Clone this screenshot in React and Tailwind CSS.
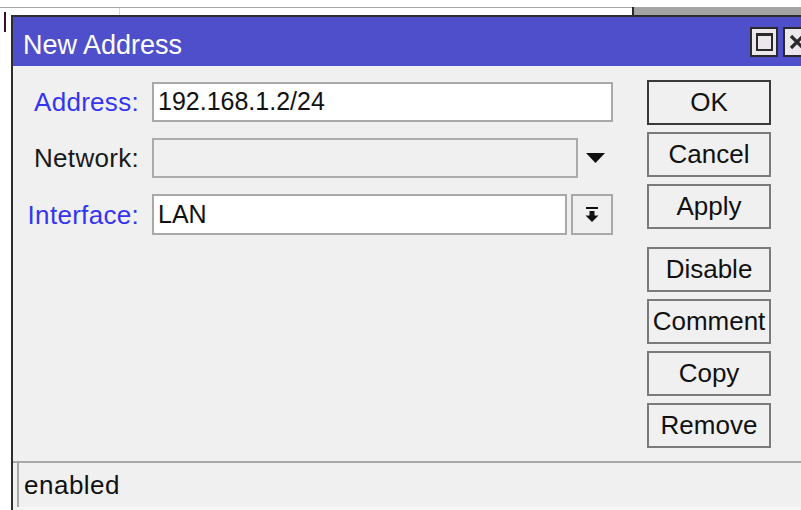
import React from "react";

const FONT = { fontFamily: '"Liberation Sans", Arial, sans-serif' };

function SideButton({ label, primary, className = "" }) {
  return (
    <button
      type="button"
      className={`flex h-[45px] w-[124px] items-center justify-center border-2 bg-[#f0f0f0] text-[26px] text-[#111] ${
        primary ? "border-[#3a3a3a]" : "border-[#7a7a7a]"
      } ${className}`}
    >
      {label}
    </button>
  );
}

function FieldLabel({ children, blue }) {
  return (
    <span
      className={`w-[126px] shrink-0 text-right text-[26px] leading-none tracking-[0.3px] ${
        blue ? "text-[#3434f2]" : "text-[#1a1a1a]"
      }`}
    >
      {children}
    </span>
  );
}

export default function App() {
  return (
    <div className="relative h-[510px] w-[801px] overflow-hidden bg-white" style={FONT}>
      {/* strip of the list window behind the dialog */}
      <div className="flex h-[15px] w-full">
        <div className="mt-[7px] flex h-[8px] w-[632px] border-t border-[#a6a6a6] bg-white">
          <div className="w-[120px] border-r border-[#d6d6d6]" />
        </div>
        <div className="mt-[7px] h-[8px] flex-1 border-l-2 border-[#2a2a2a] bg-[#a4a4a4]" />
      </div>

      {/* text cursor left over in the background */}
      <div className="absolute left-[4px] top-[12px] h-[20px] w-[2px] bg-[#3a1020]" />

      <div className="ml-[11px] w-[812px] border-l-2 border-t-2 border-[#2c2c2c] bg-[#f0f0f0]">
        {/* title bar */}
        <div className="flex h-[49px] items-center bg-[#4f4fcb] pl-[10px] pr-[12px]">
          <span className="pt-[7px] text-[27px] text-white">New Address</span>
          <div className="ml-auto flex gap-[5px]">
            <div className="flex h-[30px] w-[28px] items-center justify-center border-2 border-[#2a2a2a] bg-[#ebe7ec]">
              <div className="h-[18px] w-[17px] border-2 border-t-[3px] border-[#2a2a2a]" />
            </div>
            <div className="flex h-[30px] w-[28px] items-center justify-center border-2 border-[#2a2a2a] bg-[#ebe7ec]">
              <svg width="16" height="16" viewBox="0 0 16 16">
                <path d="M2 2 L14 14 M14 2 L2 14" stroke="#2a2a2a" strokeWidth="3.2" />
              </svg>
            </div>
          </div>
        </div>

        {/* form and buttons */}
        <div className="flex h-[395px]">
          <div className="flex flex-col gap-[16px] pt-[16px]">
            <div className="flex h-[40px] items-center">
              <FieldLabel blue>Address:</FieldLabel>
              <div className="ml-[13px] flex h-[40px] w-[461px] items-center border-2 border-[#a9a9a9] bg-white pl-[4px] text-[25px] text-[#111]">
                192.168.1.2/24
              </div>
            </div>
            <div className="flex h-[40px] items-center">
              <FieldLabel>Network:</FieldLabel>
              <div className="ml-[13px] h-[40px] w-[426px] border-2 border-[#ababab] bg-[#f0f0f0]" />
              <div className="flex w-[35px] items-center justify-center">
                <svg width="19" height="10" viewBox="0 0 19 10">
                  <path d="M0 0 H19 L9.5 10 Z" fill="#111" />
                </svg>
              </div>
            </div>
            <div className="flex h-[41px] items-center">
              <FieldLabel blue>Interface:</FieldLabel>
              <div className="ml-[13px] flex h-[41px] w-[415px] items-center border-2 border-[#a9a9a9] bg-white pl-[4px] text-[25px] text-[#111]">
                LAN
              </div>
              <div className="ml-[4px] flex h-[41px] w-[42px] items-center justify-center border-2 border-[#a9a9a9] bg-[#f0f0f0]">
                <svg width="14" height="16" viewBox="0 0 14 16">
                  <rect x="1" y="0" width="12" height="2" fill="#111" />
                  <rect x="4.5" y="4" width="5" height="5" fill="#111" />
                  <path d="M0.5 8.5 H13.5 L7 15 Z" fill="#111" />
                </svg>
              </div>
            </div>
          </div>

          <div className="ml-[34px] flex flex-col gap-[7px] pt-[14px]">
            <SideButton label="OK" primary />
            <SideButton label="Cancel" />
            <SideButton label="Apply" />
            <SideButton label="Disable" className="mt-[11px]" />
            <SideButton label="Comment" />
            <SideButton label="Copy" />
            <SideButton label="Remove" />
          </div>
        </div>

        {/* status bar */}
        <div className="border-t-2 border-[#a8a8a8] pl-[4px]">
          <div className="flex h-[44px] items-center border-l-2 border-[#a8a8a8] pl-[5px] text-[26px] tracking-[0.5px] text-[#111]">
            enabled
          </div>
          <div className="h-[10px] bg-[#f6f6f6]" />
        </div>
      </div>
    </div>
  );
}
